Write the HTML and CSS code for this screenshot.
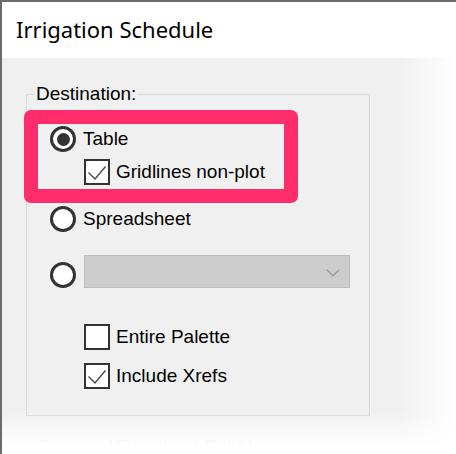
FILE: index.html
```html
<!DOCTYPE html>
<html>
<head>
<meta charset="utf-8">
<link rel="stylesheet" href="styles.css">
</head>
<body>
<div class="window">
  <div class="titlebar">Irrigation Schedule</div>
  <div class="content">
    <fieldset class="group">
      <legend class="legend">Destination:</legend>
      <div class="options">
        <div class="row row-table">
          <span class="radio checked"><span class="dot"></span></span>
          <span class="label">Table</span>
        </div>
        <div class="row row-sub row-grid">
          <span class="check"><svg viewBox="0 0 26 26" width="26" height="26"><polyline points="4.5,13.5 11,20 21.5,7.5" fill="none" stroke="#4a4a4a" stroke-width="1.4"/></svg></span>
          <span class="label clabel">Gridlines non-plot</span>
        </div>
        <div class="row row-sheet">
          <span class="radio"></span>
          <span class="label">Spreadsheet</span>
        </div>
        <div class="row row-combo">
          <span class="radio"></span>
          <span class="combo"><svg class="chev" viewBox="0 0 14 8" width="14" height="8"><polyline points="0.7,0.7 7,6.8 13.3,0.7" fill="none" stroke="#9a9a9a" stroke-width="1.2"/></svg></span>
        </div>
        <div class="row row-sub row-palette">
          <span class="check"></span>
          <span class="label clabel">Entire Palette</span>
        </div>
        <div class="row row-sub row-xrefs">
          <span class="check"><svg viewBox="0 0 26 26" width="26" height="26"><polyline points="4.5,13.5 11,20 21.5,7.5" fill="none" stroke="#4a4a4a" stroke-width="1.4"/></svg></span>
          <span class="label clabel">Include Xrefs</span>
        </div>
      </div>
    </fieldset>
    <div class="next">Canopy / Rotation / Bubblers</div>
  </div>
  <div class="highlight"></div>
  <div class="fade"></div>
</div>
</body>
</html>
```
FILE: styles.css
```css
html, body {
  margin: 0;
  padding: 0;
  background: #ffffff;
}
.window {
  position: relative;
  width: 456px;
  height: 454px;
  box-sizing: border-box;
  border-top: 2px solid #6b6b6b;
  border-left: 2px solid #6b6b6b;
  background: #ffffff;
  overflow: hidden;
  display: flex;
  flex-direction: column;
  font-family: "Liberation Sans", Arial, sans-serif;
  font-size: 19px;
  color: #000;
}
.titlebar {
  flex: none;
  height: 56px;
  box-sizing: border-box;
  padding-left: 14px;
  padding-top: 12px;
  background: #ffffff;
  font-family: "Noto Sans", "Open Sans", sans-serif;
  font-size: 22px;
  line-height: 30px;
}
.content {
  flex: 1;
  min-height: 0;
  overflow: hidden;
  background: #f0f0f0;
  padding-left: 24px;
  padding-top: 25px;
}
.group {
  width: 344px;
  box-sizing: border-box;
  margin: 0;
  border: 1px solid #d9d9d9;
  padding: 0 0 26px 8px;
  min-inline-size: 0;
}
.legend {
  padding: 0 1px;
  line-height: 22px;
}
.options {
  display: flex;
  flex-direction: column;
  padding-top: 21px;
}
.row {
  display: flex;
  align-items: center;
  height: 26px;
  padding-left: 15px;
}
.row-sub {
  padding-left: 49px;
}
.row-grid { margin-top: 7px; }
.row-sheet { margin-top: 21px; }
.row-combo {
  margin-top: 23px;
  height: 33px;
  align-items: flex-end;
}
.row-palette { margin-top: 36px; }
.row-xrefs { margin-top: 13px; }
.radio {
  width: 26px;
  height: 26px;
  box-sizing: border-box;
  border: 3px solid #333333;
  border-radius: 50%;
  background: #ffffff;
  display: flex;
  align-items: center;
  justify-content: center;
  flex: none;
}
.dot {
  width: 13px;
  height: 13px;
  border-radius: 50%;
  background: #333333;
}
.check {
  width: 26px;
  height: 26px;
  box-sizing: border-box;
  border: 2px solid #333333;
  background: #ffffff;
  flex: none;
  position: relative;
}
.check svg {
  position: absolute;
  left: -2px;
  top: -2px;
}
.label {
  margin-left: 7px;
  line-height: 22px;
}
.clabel {
  margin-left: 6px;
}
.combo {
  margin-left: 8px;
  width: 266px;
  height: 33px;
  box-sizing: border-box;
  background: #cccccc;
  border: 1px solid #bdbdbd;
  display: flex;
  align-items: center;
  justify-content: flex-end;
  padding-right: 9px;
  align-self: flex-end;
}
.chev {
  display: block;
  margin-top: 2px;
}
.next {
  margin-top: 20px;
  padding-left: 10px;
  color: #c8c8c8;
  line-height: 22px;
}
.highlight {
  position: absolute;
  left: 22px;
  top: 108px;
  width: 274px;
  height: 93px;
  box-sizing: border-box;
  border: 14px solid #fe2c6a;
  border-radius: 7px;
}
.fade {
  position: absolute;
  left: -2px;
  top: -2px;
  width: 456px;
  height: 454px;
  pointer-events: none;
  background:
    linear-gradient(to right, rgba(255,255,255,0) 395px, rgba(255,255,255,1) 456px),
    linear-gradient(to bottom, rgba(255,255,255,0) 412px, rgba(255,255,255,1) 446px);
}
```
